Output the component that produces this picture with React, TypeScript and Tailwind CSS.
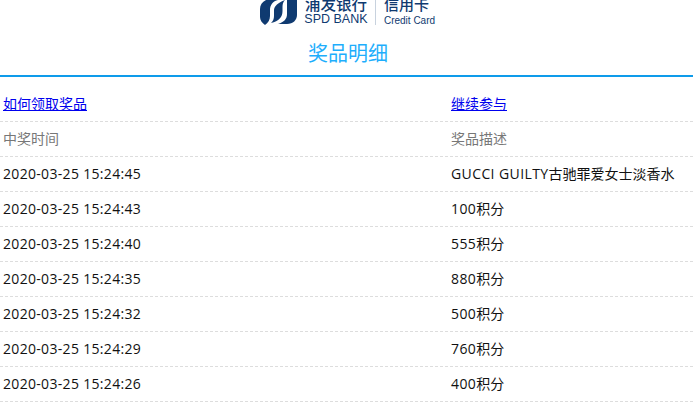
import React from 'react';

const rows = [
  { time: '2020-03-25 15:24:45', prize: 'GUCCI GUILTY', rest: '古驰罪爱女士淡香水' },
  { time: '2020-03-25 15:24:43', prize: '100', rest: '积分' },
  { time: '2020-03-25 15:24:40', prize: '555', rest: '积分' },
  { time: '2020-03-25 15:24:35', prize: '880', rest: '积分' },
  { time: '2020-03-25 15:24:32', prize: '500', rest: '积分' },
  { time: '2020-03-25 15:24:29', prize: '760', rest: '积分' },
  { time: '2020-03-25 15:24:26', prize: '400', rest: '积分' },
];

const Logo = () => (
  <svg width="37" height="26" viewBox="0 0 37 26" className="shrink-0">
    <path d="M6 0H18C13 1 10 5 10 10V16C10 20 8 23 5 25C2 23 0 20 0 17V9C0 5 2 2 6 0Z" fill="#0f3a70" />
    <path d="M19 3C21 1.500 23 0.500 25 0C23 2 22.500 4 22.500 7V11C22.500 17 19 21 11 23C13 21 14 19 14 16V10C14 7 16 5 19 3Z" fill="#0f3a70" />
    <path d="M27 0H37V15C37 20 33 24 27 24H18C24 22 27 19 27 14V4C27 2.500 27 1 27 0Z" fill="#0f3a70" />
  </svg>
);

const Row = ({ left, right, className }: { left: React.ReactNode; right: React.ReactNode; className?: string }) => (
  <div className={`grid grid-cols-[448px_1fr] h-[35px] items-center pl-[3px] pb-[2px] border-b border-dashed border-[#dddddd] ${className ?? ''}`}>
    <div>{left}</div>
    <div>{right}</div>
  </div>
);

export default function App() {
  return (
    <div className="h-[411px] overflow-hidden bg-white text-[14px] text-[#111111] font-['Open_Sans','Noto_Sans_CJK_SC',sans-serif]">
      {/* Header, scrolled a little so the logo is cut at the top */}
      <header className="h-[77px] border-b-2 border-[#0e9bea] flex flex-col items-center overflow-hidden">
        <div className="flex items-start justify-center h-[26px] ml-[2px] text-[#0f3a70]">
          <Logo />
          <div className="ml-[8px] w-[62px] flex flex-col items-center">
            <span className="text-[15.5px] leading-[13px] font-medium -mt-[2px] whitespace-nowrap">浦发银行</span>
            <span className="text-[12.5px] leading-[13px] mt-[2px] whitespace-nowrap font-['Liberation_Sans',sans-serif]">SPD BANK</span>
          </div>
          <div className="w-px h-[25px] bg-[#c8d2de] mx-[8px]" />
          <div className="flex flex-col">
            <span className="text-[15px] leading-[13px] font-medium -mt-[2px] whitespace-nowrap">信用卡</span>
            <span className="text-[10px] leading-[13px] mt-[3px] whitespace-nowrap font-['Liberation_Sans',sans-serif]">Credit Card</span>
          </div>
        </div>
        <h1 className="mt-[14px] ml-[3px] text-[20px] leading-[28px] text-[#1eaefc]">奖品明细</h1>
      </header>

      <main className="pt-[10px]">
        <Row
          left={<a href="#" className="text-[#0000ee] underline">如何领取奖品</a>}
          right={<a href="#" className="text-[#0000ee] underline">继续参与</a>}
        />
        <Row className="text-[#777777]" left="中奖时间" right="奖品描述" />
        {rows.map((r) => (
          <Row
            key={r.time}
            left={<span className="tracking-[0.32px]">{r.time}</span>}
            right={<><span className="tracking-[0.4px]">{r.prize}</span>{r.rest}</>}
          />
        ))}
      </main>
    </div>
  );
}
